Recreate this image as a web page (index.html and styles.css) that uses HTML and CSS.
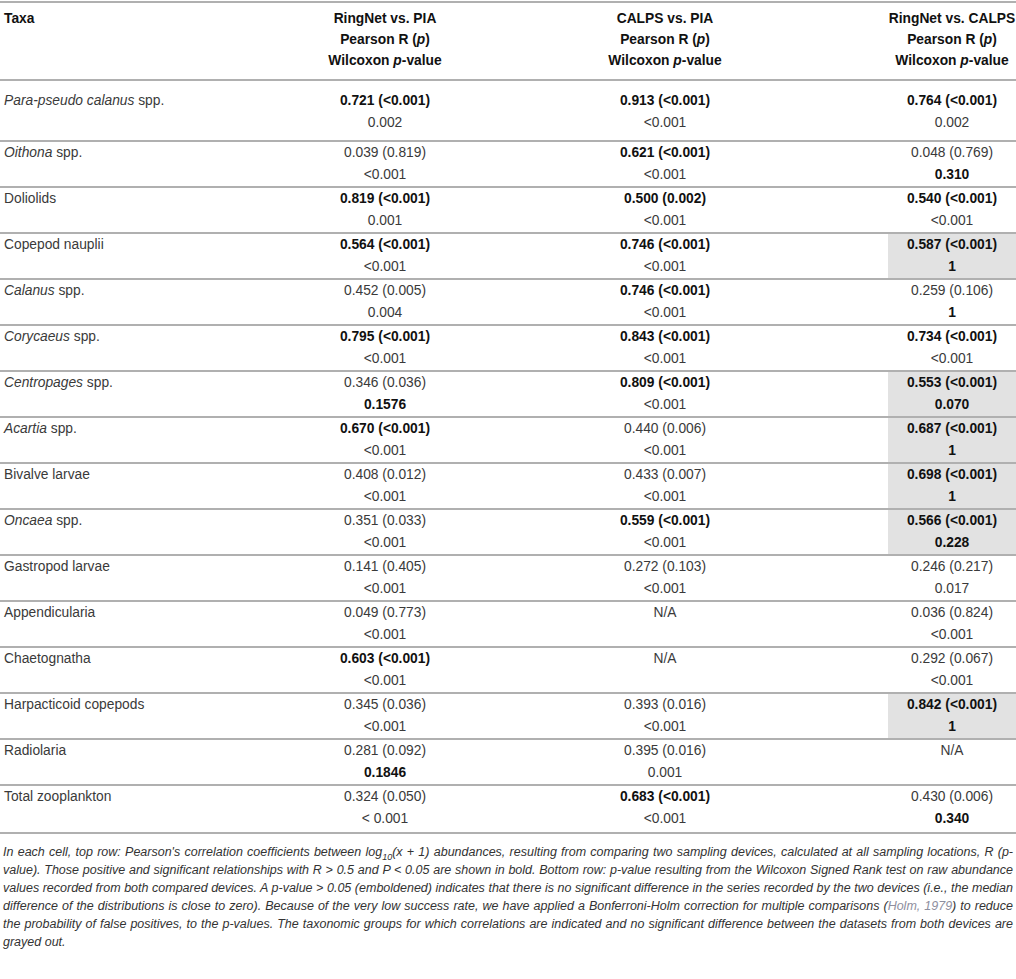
FILE: index.html
```html
<!DOCTYPE html>
<html>
<head>
<meta charset="utf-8">
<link rel="stylesheet" href="styles.css">
</head>
<body>
<table class="tbl">
  <colgroup>
    <col class="c0"><col class="c1"><col class="c2"><col class="c3">
  </colgroup>
  <thead>
    <tr>
      <th class="taxa">Taxa</th>
      <th><div>RingNet vs. PIA</div><div>Pearson R (<i>p</i>)</div><div>Wilcoxon <i>p</i>-value</div></th>
      <th><div>CALPS vs. PIA</div><div>Pearson R (<i>p</i>)</div><div>Wilcoxon <i>p</i>-value</div></th>
      <th><div>RingNet vs. CALPS</div><div>Pearson R (<i>p</i>)</div><div>Wilcoxon <i>p</i>-value</div></th>
    </tr>
  </thead>
  <tbody>
    <tr class="first">
      <td class="taxa"><i>Para-pseudo calanus</i> spp.</td>
      <td><div><b>0.721 (&lt;0.001)</b></div><div>0.002</div></td>
      <td><div><b>0.913 (&lt;0.001)</b></div><div>&lt;0.001</div></td>
      <td><div><b>0.764 (&lt;0.001)</b></div><div>0.002</div></td>
    </tr>
    <tr>
      <td class="taxa"><i>Oithona</i> spp.</td>
      <td><div>0.039 (0.819)</div><div>&lt;0.001</div></td>
      <td><div><b>0.621 (&lt;0.001)</b></div><div>&lt;0.001</div></td>
      <td><div>0.048 (0.769)</div><div><b>0.310</b></div></td>
    </tr>
    <tr>
      <td class="taxa">Doliolids</td>
      <td><div><b>0.819 (&lt;0.001)</b></div><div>0.001</div></td>
      <td><div><b>0.500 (0.002)</b></div><div>&lt;0.001</div></td>
      <td><div><b>0.540 (&lt;0.001)</b></div><div>&lt;0.001</div></td>
    </tr>
    <tr>
      <td class="taxa">Copepod nauplii</td>
      <td><div><b>0.564 (&lt;0.001)</b></div><div>&lt;0.001</div></td>
      <td><div><b>0.746 (&lt;0.001)</b></div><div>&lt;0.001</div></td>
      <td class="gray"><div><b>0.587 (&lt;0.001)</b></div><div><b>1</b></div></td>
    </tr>
    <tr>
      <td class="taxa"><i>Calanus</i> spp.</td>
      <td><div>0.452 (0.005)</div><div>0.004</div></td>
      <td><div><b>0.746 (&lt;0.001)</b></div><div>&lt;0.001</div></td>
      <td><div>0.259 (0.106)</div><div><b>1</b></div></td>
    </tr>
    <tr>
      <td class="taxa"><i>Corycaeus</i> spp.</td>
      <td><div><b>0.795 (&lt;0.001)</b></div><div>&lt;0.001</div></td>
      <td><div><b>0.843 (&lt;0.001)</b></div><div>&lt;0.001</div></td>
      <td><div><b>0.734 (&lt;0.001)</b></div><div>&lt;0.001</div></td>
    </tr>
    <tr>
      <td class="taxa"><i>Centropages</i> spp.</td>
      <td><div>0.346 (0.036)</div><div><b>0.1576</b></div></td>
      <td><div><b>0.809 (&lt;0.001)</b></div><div>&lt;0.001</div></td>
      <td class="gray"><div><b>0.553 (&lt;0.001)</b></div><div><b>0.070</b></div></td>
    </tr>
    <tr>
      <td class="taxa"><i>Acartia</i> spp.</td>
      <td><div><b>0.670 (&lt;0.001)</b></div><div>&lt;0.001</div></td>
      <td><div>0.440 (0.006)</div><div>&lt;0.001</div></td>
      <td class="gray"><div><b>0.687 (&lt;0.001)</b></div><div><b>1</b></div></td>
    </tr>
    <tr>
      <td class="taxa">Bivalve larvae</td>
      <td><div>0.408 (0.012)</div><div>&lt;0.001</div></td>
      <td><div>0.433 (0.007)</div><div>&lt;0.001</div></td>
      <td class="gray"><div><b>0.698 (&lt;0.001)</b></div><div><b>1</b></div></td>
    </tr>
    <tr>
      <td class="taxa"><i>Oncaea</i> spp.</td>
      <td><div>0.351 (0.033)</div><div>&lt;0.001</div></td>
      <td><div><b>0.559 (&lt;0.001)</b></div><div>&lt;0.001</div></td>
      <td class="gray"><div><b>0.566 (&lt;0.001)</b></div><div><b>0.228</b></div></td>
    </tr>
    <tr>
      <td class="taxa">Gastropod larvae</td>
      <td><div>0.141 (0.405)</div><div>&lt;0.001</div></td>
      <td><div>0.272 (0.103)</div><div>&lt;0.001</div></td>
      <td><div>0.246 (0.217)</div><div>0.017</div></td>
    </tr>
    <tr>
      <td class="taxa">Appendicularia</td>
      <td><div>0.049 (0.773)</div><div>&lt;0.001</div></td>
      <td><div>N/A</div><div>&nbsp;</div></td>
      <td><div>0.036 (0.824)</div><div>&lt;0.001</div></td>
    </tr>
    <tr>
      <td class="taxa">Chaetognatha</td>
      <td><div><b>0.603 (&lt;0.001)</b></div><div>&lt;0.001</div></td>
      <td><div>N/A</div><div>&nbsp;</div></td>
      <td><div>0.292 (0.067)</div><div>&lt;0.001</div></td>
    </tr>
    <tr>
      <td class="taxa">Harpacticoid copepods</td>
      <td><div>0.345 (0.036)</div><div>&lt;0.001</div></td>
      <td><div>0.393 (0.016)</div><div>&lt;0.001</div></td>
      <td class="gray"><div><b>0.842 (&lt;0.001)</b></div><div><b>1</b></div></td>
    </tr>
    <tr>
      <td class="taxa">Radiolaria</td>
      <td><div>0.281 (0.092)</div><div><b>0.1846</b></div></td>
      <td><div>0.395 (0.016)</div><div>0.001</div></td>
      <td><div>N/A</div><div>&nbsp;</div></td>
    </tr>
    <tr class="last">
      <td class="taxa">Total zooplankton</td>
      <td><div>0.324 (0.050)</div><div>&lt; 0.001</div></td>
      <td><div><b>0.683 (&lt;0.001)</b></div><div>&lt;0.001</div></td>
      <td><div>0.430 (0.006)</div><div><b>0.340</b></div></td>
    </tr>
  </tbody>
</table>
<p class="caption">
  <span class="ln">In each cell, top row: Pearson's correlation coefficients between log<sub>10</sub>(x + 1) abundances, resulting from comparing two sampling devices, calculated at all sampling locations, R (p-</span>
  <span class="ln">value). Those positive and significant relationships with R &gt; 0.5 and P &lt; 0.05 are shown in bold. Bottom row: p-value resulting from the Wilcoxon Signed Rank test on raw abundance</span>
  <span class="ln">values recorded from both compared devices. A p-value &gt; 0.05 (emboldened) indicates that there is no significant difference in the series recorded by the two devices (i.e., the median</span>
  <span class="ln">difference of the distributions is close to zero). Because of the very low success rate, we have applied a Bonferroni-Holm correction for multiple comparisons (<span class="ref">Holm, 1979</span>) to reduce</span>
  <span class="ln">the probability of false positives, to the p-values. The taxonomic groups for which correlations are indicated and no significant difference between the datasets from both devices are</span>
  <span class="last">grayed out.</span>
</p>
</body>
</html>
```

FILE: styles.css
```css
html, body {
  margin: 0;
  padding: 0;
  background: #ffffff;
}
body {
  font-family: "Liberation Sans", Arial, sans-serif;
  color: #3a3a3a;
  font-size: 13.8px;
}
.tbl {
  width: 1016px;
  border-collapse: collapse;
  table-layout: fixed;
  margin-top: 1px;
}
.c0 { width: 328px; }
.c1 { width: 114px; }
.c2 { width: 446px; }
.c3 { width: 128px; }
.tbl th {
  font-weight: bold;
  color: #111111;
  text-align: center;
  vertical-align: top;
  line-height: 21px;
  padding: 5px 0 8px;
  border-top: 2px solid #b0b0b0;
  border-bottom: 2px solid #b0b0b0;
  white-space: nowrap;
}
.tbl th.taxa {
  text-align: left;
  padding-left: 4px;
}
.tbl td {
  text-align: center;
  vertical-align: top;
  line-height: 22px;
  padding: 0;
  border-bottom: 2px solid #b0b0b0;
  white-space: nowrap;
}
.tbl td.taxa {
  text-align: left;
  padding-left: 4px;
}
.tbl tr.first td {
  padding-top: 9px;
  padding-bottom: 6px;
}
.tbl tr.last td {
  padding-bottom: 2px;
}
.tbl td.gray {
  background: #e2e2e2;
}
.tbl b {
  color: #111111;
}
.caption {
  margin: 9px 0 0;
  padding: 0 3px;
  font-style: italic;
  font-size: 12.5px;
  line-height: 18px;
  color: #333333;
}
.caption .ln {
  display: block;
  white-space: nowrap;
  text-align: justify;
  text-align-last: justify;
}
.caption .last {
  display: block;
}
.caption sub {
  font-size: 9px;
  line-height: 0;
}
.caption .ref {
  color: #8e8e9e;
}
```
